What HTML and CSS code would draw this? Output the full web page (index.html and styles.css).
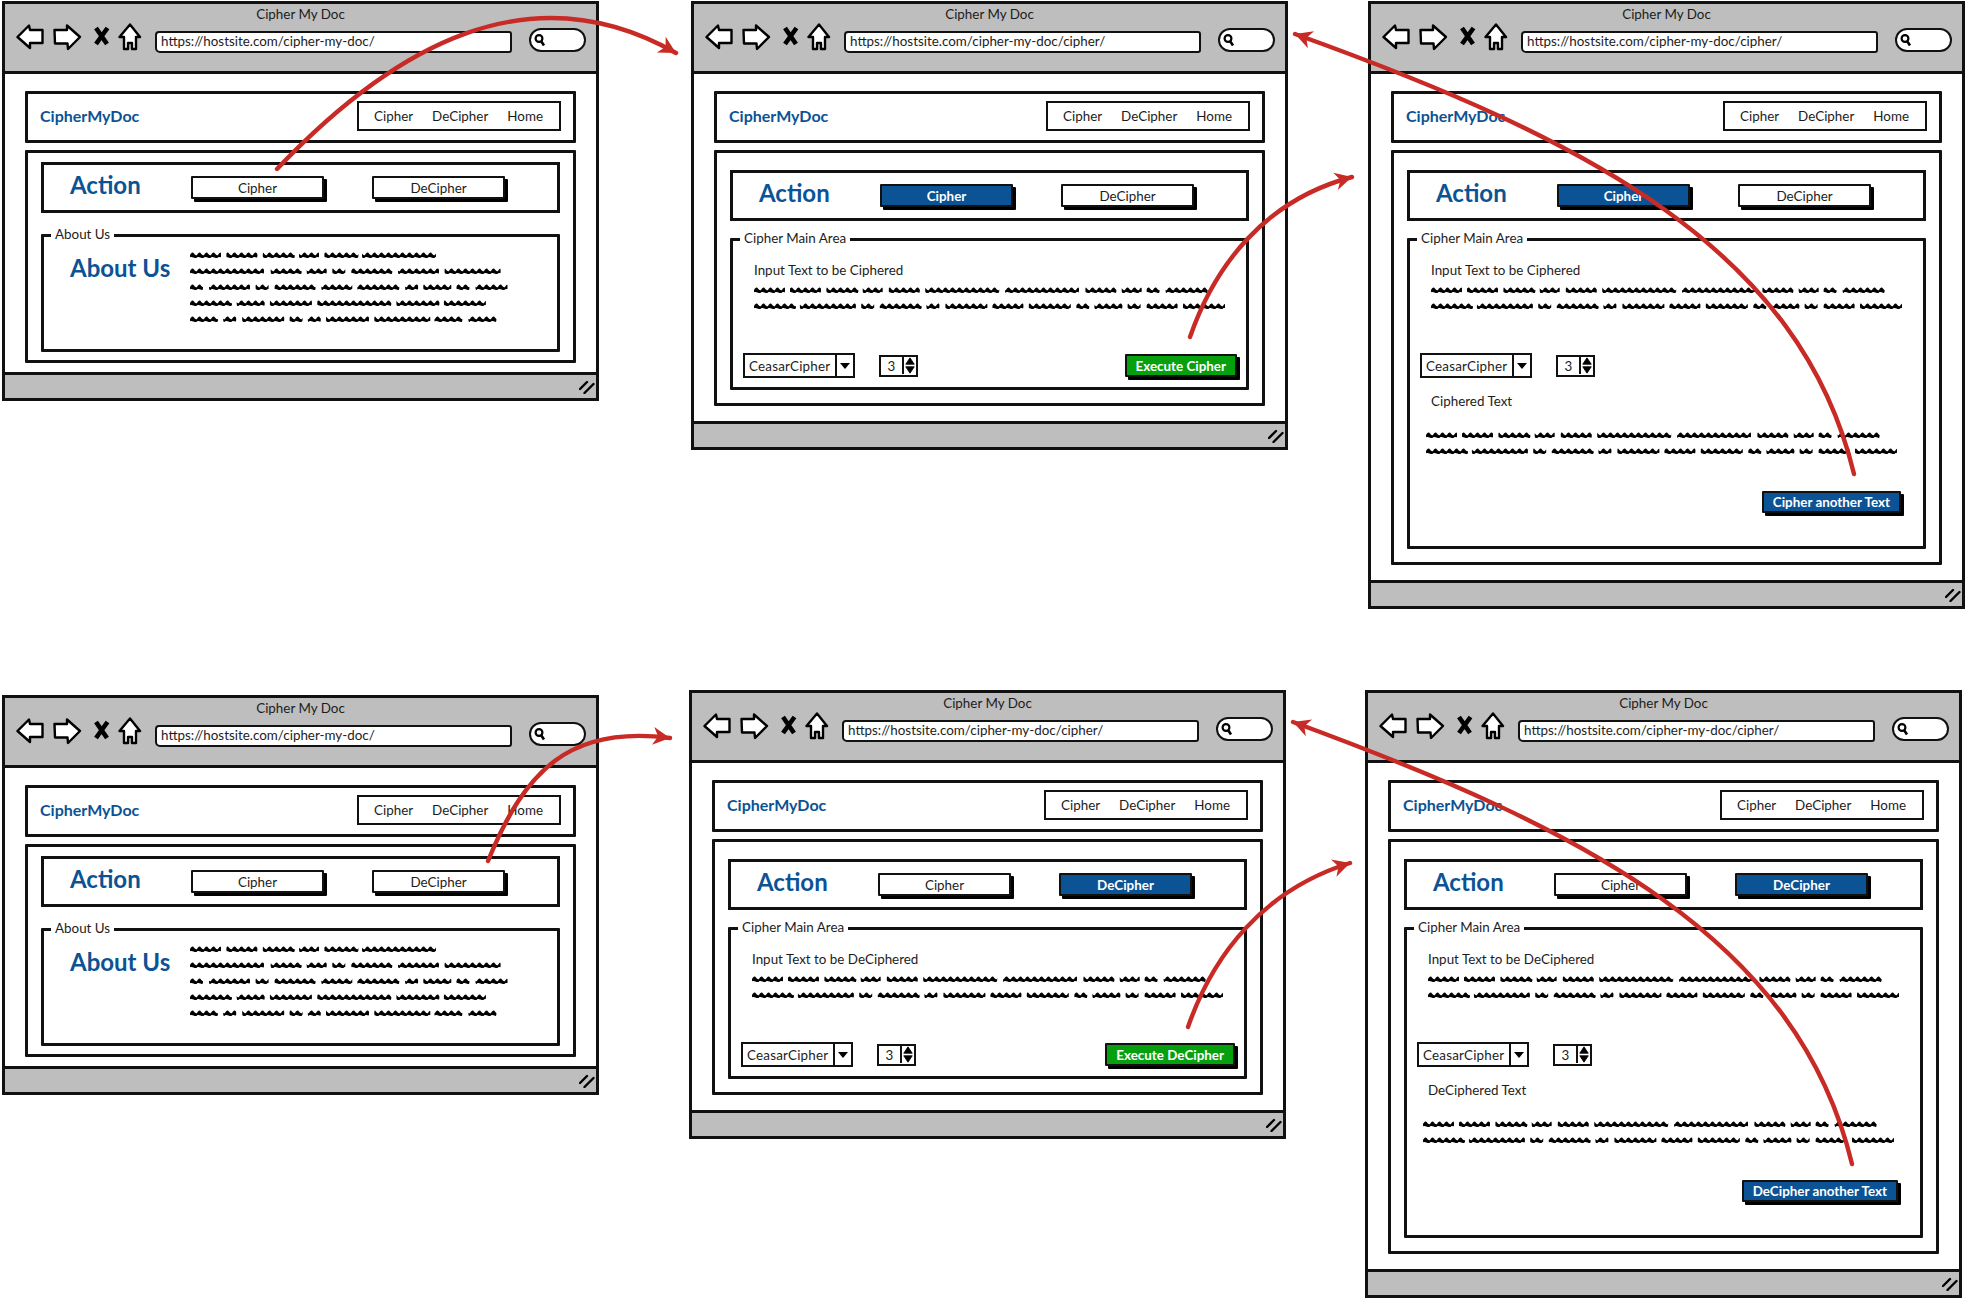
FILE: index.html
```html
<!DOCTYPE html>
<html lang="en">
<head>
<meta charset="utf-8">
<title>Cipher My Doc wireframes</title>
<link rel="stylesheet" href="styles.css">
</head>
<body>
<svg class="defs" xmlns="http://www.w3.org/2000/svg">
  <defs>
    <pattern id="sq" width="7" height="8" patternUnits="userSpaceOnUse">
      <path d="M0 4C1 2.2 2.4 0.9 3.5 2S5.6 4.8 7 4V6.4C6 7.6 4.9 6.8 3.5 6.4S1 5.7 0 6.4Z" fill="#000"/>
    </pattern>
    <marker id="head" markerUnits="userSpaceOnUse" markerWidth="26" markerHeight="26" refX="18" refY="13" orient="auto">
      <path d="M18 13L1 4L6 13L1 22Z" fill="#c82a26"/>
    </marker>
  </defs>
  <symbol id="a1"><g fill="url(#sq)"><rect width="31" height="8" rx="3"/><rect x="36.4" width="31" height="8" rx="3"/><rect x="72.8" width="32" height="8" rx="3"/><rect x="109" width="20" height="8" rx="3"/><rect x="134.4" width="34" height="8" rx="3"/><rect x="172" width="74" height="8" rx="3"/></g></symbol>
  <symbol id="a2"><g fill="url(#sq)"><rect width="74" height="8" rx="3"/><rect x="80.7" width="31" height="8" rx="3"/><rect x="116.7" width="20" height="8" rx="3"/><rect x="142.3" width="13" height="8" rx="3"/><rect x="161.3" width="41" height="8" rx="3"/><rect x="208" width="41" height="8" rx="3"/><rect x="254.6" width="56" height="8" rx="3"/></g></symbol>
  <symbol id="a3"><g fill="url(#sq)"><rect width="13" height="8" rx="3"/><rect x="19" width="41" height="8" rx="3"/><rect x="65.6" width="13" height="8" rx="3"/><rect x="84.6" width="41" height="8" rx="3"/><rect x="131.3" width="31" height="8" rx="3"/><rect x="167.3" width="42" height="8" rx="3"/><rect x="215.1" width="13" height="8" rx="3"/><rect x="233.3" width="28" height="8" rx="3"/><rect x="266.5" width="13" height="8" rx="3"/><rect x="285.5" width="32" height="8" rx="3"/></g></symbol>
  <symbol id="a4"><g fill="url(#sq)"><rect width="42" height="8" rx="3"/><rect x="46.7" width="28" height="8" rx="3"/><rect x="79.9" width="42" height="8" rx="3"/><rect x="127.3" width="74" height="8" rx="3"/><rect x="206.4" width="43" height="8" rx="3"/><rect x="253.9" width="42" height="8" rx="3"/></g></symbol>
  <symbol id="a5"><g fill="url(#sq)"><rect width="28" height="8" rx="3"/><rect x="33.2" width="13" height="8" rx="3"/><rect x="52.2" width="42" height="8" rx="3"/><rect x="99.6" width="13" height="8" rx="3"/><rect x="117.8" width="13" height="8" rx="3"/><rect x="136" width="43" height="8" rx="3"/><rect x="184.3" width="56" height="8" rx="3"/><rect x="244.4" width="28" height="8" rx="3"/><rect x="278.4" width="28" height="8" rx="3"/></g></symbol>
  <symbol id="t1"><g fill="url(#sq)"><rect width="31" height="8" rx="3"/><rect x="36" width="31" height="8" rx="3"/><rect x="72.4" width="32" height="8" rx="3"/><rect x="108.7" width="20" height="8" rx="3"/><rect x="134.8" width="31" height="8" rx="3"/><rect x="171.2" width="74" height="8" rx="3"/><rect x="251" width="74" height="8" rx="3"/><rect x="331.4" width="31" height="8" rx="3"/><rect x="367.7" width="20" height="8" rx="3"/><rect x="392.6" width="13" height="8" rx="3"/><rect x="411.6" width="42" height="8" rx="3"/></g></symbol>
  <symbol id="t2"><g fill="url(#sq)"><rect width="42" height="8" rx="3"/><rect x="45.9" width="56" height="8" rx="3"/><rect x="107.2" width="13" height="8" rx="3"/><rect x="125.7" width="42" height="8" rx="3"/><rect x="172.4" width="13" height="8" rx="3"/><rect x="191.4" width="42" height="8" rx="3"/><rect x="238.4" width="31" height="8" rx="3"/><rect x="274.8" width="42" height="8" rx="3"/><rect x="322.3" width="13" height="8" rx="3"/><rect x="340.4" width="28" height="8" rx="3"/><rect x="373.6" width="13" height="8" rx="3"/><rect x="392.6" width="31" height="8" rx="3"/><rect x="429" width="42" height="8" rx="3"/></g></symbol>
  <symbol id="navicons" viewBox="0 0 126 28">
    <g fill="#fff" stroke="#000" stroke-width="2.4" stroke-linejoin="round">
      <path d="M1.5 14L13 2.5L14 7H26.5V20H14V25Z"/>
      <path d="M38.5 7H51V2.5L64 14L52 26L51.5 20.5H39Z"/>
      <path d="M114 1.5L124 14H120V26H116V20H112V26H108V14H103.5Z"/>
    </g>
    <path d="M80 5L91 21M91.5 5L80 21" fill="none" stroke="#000" stroke-width="4.6"/>
  </symbol>
  <symbol id="lens" viewBox="0 0 12 14">
    <circle cx="5" cy="5.5" r="3.4" fill="#fff" stroke="#000" stroke-width="2.2"/>
    <path d="M7 8L10 12.5" stroke="#000" stroke-width="2.6"/>
  </symbol>
  <symbol id="grip" viewBox="0 0 16 14">
    <path d="M1 9L8 2M5.5 13L14.5 4" stroke="#000" stroke-width="2.4" stroke-linecap="round"/>
  </symbol>
  <symbol id="spin" viewBox="0 0 14 20">
    <path d="M7 1L12 8.5H2Z M7 19L2 11.5H12Z" fill="#000" stroke="#000" stroke-width="1" stroke-linejoin="round"/>
  </symbol>
</svg>

<main class="canvas">

<section class="window win1">
  <header class="chrome">
    <div class="title">Cipher My Doc</div>
    <div class="toolbar">
      <svg class="navicons"><use href="#navicons"/></svg>
      <div class="url">https://hostsite.com/cipher-my-doc/</div>
      <div class="search"><svg class="lens"><use href="#lens"/></svg></div>
    </div>
  </header>
  <div class="content">
    <div class="navbox">
      <div class="logo">CipherMyDoc</div>
      <nav class="links"><span>Cipher</span><span>DeCipher</span><span>Home</span></nav>
    </div>
    <div class="mainbox mainbox-about">
      <div class="action">
        <h2 class="heading">Action</h2>
        <div class="btn">Cipher</div>
        <div class="btn">DeCipher</div>
      </div>
      <div class="group group-about">
        <div class="legend">About Us</div>
        <h2 class="heading">About Us</h2>
        <div class="para">
          <svg class="sq"><use href="#a1"/></svg><svg class="sq"><use href="#a2"/></svg><svg class="sq"><use href="#a3"/></svg><svg class="sq"><use href="#a4"/></svg><svg class="sq"><use href="#a5"/></svg>
        </div>
      </div>
    </div>
  </div>
  <footer class="foot"><svg class="grip"><use href="#grip"/></svg></footer>
</section>

<section class="window win2">
  <header class="chrome">
    <div class="title">Cipher My Doc</div>
    <div class="toolbar">
      <svg class="navicons"><use href="#navicons"/></svg>
      <div class="url">https://hostsite.com/cipher-my-doc/cipher/</div>
      <div class="search"><svg class="lens"><use href="#lens"/></svg></div>
    </div>
  </header>
  <div class="content">
    <div class="navbox">
      <div class="logo">CipherMyDoc</div>
      <nav class="links"><span>Cipher</span><span>DeCipher</span><span>Home</span></nav>
    </div>
    <div class="mainbox mainbox-cipher">
      <div class="action">
        <h2 class="heading">Action</h2>
        <div class="btn btn-blue">Cipher</div>
        <div class="btn">DeCipher</div>
      </div>
      <div class="group group-cipher">
        <div class="legend">Cipher Main Area</div>
        <div class="label">Input Text to be Ciphered</div>
        <div class="input-lines">
          <svg class="sq"><use href="#t1"/></svg><svg class="sq"><use href="#t2"/></svg>
        </div>
        <div class="controls">
          <div class="select"><span class="select-text">CeasarCipher</span><span class="caret"></span></div>
          <div class="spinner"><span class="spin-val">3</span><svg class="spin-btn"><use href="#spin"/></svg></div>
          <div class="btn btn-green">Execute Cipher</div>
        </div>
      </div>
    </div>
  </div>
  <footer class="foot"><svg class="grip"><use href="#grip"/></svg></footer>
</section>

<section class="window win3">
  <header class="chrome">
    <div class="title">Cipher My Doc</div>
    <div class="toolbar">
      <svg class="navicons"><use href="#navicons"/></svg>
      <div class="url">https://hostsite.com/cipher-my-doc/cipher/</div>
      <div class="search"><svg class="lens"><use href="#lens"/></svg></div>
    </div>
  </header>
  <div class="content">
    <div class="navbox">
      <div class="logo">CipherMyDoc</div>
      <nav class="links"><span>Cipher</span><span>DeCipher</span><span>Home</span></nav>
    </div>
    <div class="mainbox mainbox-cipher">
      <div class="action">
        <h2 class="heading">Action</h2>
        <div class="btn btn-blue">Cipher</div>
        <div class="btn">DeCipher</div>
      </div>
      <div class="group group-cipher">
        <div class="legend">Cipher Main Area</div>
        <div class="label">Input Text to be Ciphered</div>
        <div class="input-lines">
          <svg class="sq"><use href="#t1"/></svg><svg class="sq"><use href="#t2"/></svg>
        </div>
        <div class="controls">
          <div class="select"><span class="select-text">CeasarCipher</span><span class="caret"></span></div>
          <div class="spinner"><span class="spin-val">3</span><svg class="spin-btn"><use href="#spin"/></svg></div>
        </div>
        <div class="label label-out">Ciphered Text</div>
        <div class="output-lines">
          <svg class="sq"><use href="#t1"/></svg><svg class="sq"><use href="#t2"/></svg>
        </div>
        <div class="again"><div class="btn btn-blue btn-auto">Cipher another Text</div></div>
      </div>
    </div>
  </div>
  <footer class="foot"><svg class="grip"><use href="#grip"/></svg></footer>
</section>

<section class="window win4">
  <header class="chrome">
    <div class="title">Cipher My Doc</div>
    <div class="toolbar">
      <svg class="navicons"><use href="#navicons"/></svg>
      <div class="url">https://hostsite.com/cipher-my-doc/</div>
      <div class="search"><svg class="lens"><use href="#lens"/></svg></div>
    </div>
  </header>
  <div class="content">
    <div class="navbox">
      <div class="logo">CipherMyDoc</div>
      <nav class="links"><span>Cipher</span><span>DeCipher</span><span>Home</span></nav>
    </div>
    <div class="mainbox mainbox-about">
      <div class="action">
        <h2 class="heading">Action</h2>
        <div class="btn">Cipher</div>
        <div class="btn">DeCipher</div>
      </div>
      <div class="group group-about">
        <div class="legend">About Us</div>
        <h2 class="heading">About Us</h2>
        <div class="para">
          <svg class="sq"><use href="#a1"/></svg><svg class="sq"><use href="#a2"/></svg><svg class="sq"><use href="#a3"/></svg><svg class="sq"><use href="#a4"/></svg><svg class="sq"><use href="#a5"/></svg>
        </div>
      </div>
    </div>
  </div>
  <footer class="foot"><svg class="grip"><use href="#grip"/></svg></footer>
</section>

<section class="window win5">
  <header class="chrome">
    <div class="title">Cipher My Doc</div>
    <div class="toolbar">
      <svg class="navicons"><use href="#navicons"/></svg>
      <div class="url">https://hostsite.com/cipher-my-doc/cipher/</div>
      <div class="search"><svg class="lens"><use href="#lens"/></svg></div>
    </div>
  </header>
  <div class="content">
    <div class="navbox">
      <div class="logo">CipherMyDoc</div>
      <nav class="links"><span>Cipher</span><span>DeCipher</span><span>Home</span></nav>
    </div>
    <div class="mainbox mainbox-cipher">
      <div class="action">
        <h2 class="heading">Action</h2>
        <div class="btn">Cipher</div>
        <div class="btn btn-blue">DeCipher</div>
      </div>
      <div class="group group-cipher">
        <div class="legend">Cipher Main Area</div>
        <div class="label">Input Text to be DeCiphered</div>
        <div class="input-lines">
          <svg class="sq"><use href="#t1"/></svg><svg class="sq"><use href="#t2"/></svg>
        </div>
        <div class="controls">
          <div class="select"><span class="select-text">CeasarCipher</span><span class="caret"></span></div>
          <div class="spinner"><span class="spin-val">3</span><svg class="spin-btn"><use href="#spin"/></svg></div>
          <div class="btn btn-green">Execute DeCipher</div>
        </div>
      </div>
    </div>
  </div>
  <footer class="foot"><svg class="grip"><use href="#grip"/></svg></footer>
</section>

<section class="window win6">
  <header class="chrome">
    <div class="title">Cipher My Doc</div>
    <div class="toolbar">
      <svg class="navicons"><use href="#navicons"/></svg>
      <div class="url">https://hostsite.com/cipher-my-doc/cipher/</div>
      <div class="search"><svg class="lens"><use href="#lens"/></svg></div>
    </div>
  </header>
  <div class="content">
    <div class="navbox">
      <div class="logo">CipherMyDoc</div>
      <nav class="links"><span>Cipher</span><span>DeCipher</span><span>Home</span></nav>
    </div>
    <div class="mainbox mainbox-cipher">
      <div class="action">
        <h2 class="heading">Action</h2>
        <div class="btn">Cipher</div>
        <div class="btn btn-blue">DeCipher</div>
      </div>
      <div class="group group-cipher">
        <div class="legend">Cipher Main Area</div>
        <div class="label">Input Text to be DeCiphered</div>
        <div class="input-lines">
          <svg class="sq"><use href="#t1"/></svg><svg class="sq"><use href="#t2"/></svg>
        </div>
        <div class="controls">
          <div class="select"><span class="select-text">CeasarCipher</span><span class="caret"></span></div>
          <div class="spinner"><span class="spin-val">3</span><svg class="spin-btn"><use href="#spin"/></svg></div>
        </div>
        <div class="label label-out">DeCiphered Text</div>
        <div class="output-lines">
          <svg class="sq"><use href="#t1"/></svg><svg class="sq"><use href="#t2"/></svg>
        </div>
        <div class="again"><div class="btn btn-blue btn-auto">DeCipher another Text</div></div>
      </div>
    </div>
  </div>
  <footer class="foot"><svg class="grip"><use href="#grip"/></svg></footer>
</section>

<svg class="arrows" viewBox="0 0 1966 1298" xmlns="http://www.w3.org/2000/svg">
  <g fill="none" stroke="#c82a26" stroke-width="4.4" stroke-linecap="round">
    <path marker-end="url(#head)" d="M277 169C395 45 530 -30 676 53"/>
    <path marker-end="url(#head)" d="M1190 337C1215 265 1265 200 1352 177"/>
    <path marker-end="url(#head)" d="M1854 474C1800 250 1590 140 1295 34"/>
    <path marker-end="url(#head)" d="M488 861C525 770 570 725 670 738"/>
    <path marker-end="url(#head)" d="M1188 1027C1213 955 1263 890 1350 863"/>
    <path marker-end="url(#head)" d="M1852 1164C1798 940 1588 830 1293 722"/>
  </g>
</svg>

</main>
</body>
</html>
```
FILE: styles.css
```css
* { box-sizing: border-box; }
html, body { margin: 0; padding: 0; background: #fff; }
body { font-family: "Lato", "Liberation Sans", sans-serif; font-size: 13.4px; color: #1c1c1c; }

.defs { width: 0; height: 0; overflow: hidden; display: block; }
.canvas { position: relative; width: 1966px; height: 1298px; overflow: hidden; }
.arrows { position: absolute; left: 0; top: 0; width: 1966px; height: 1298px; pointer-events: none; overflow: visible; }

.window { position: absolute; width: 597px; display: flex; flex-direction: column; border: 3px solid #111; background: #fff; }
.win1 { left: 2px; top: 1px; }
.win2 { left: 691px; top: 1px; }
.win3 { left: 1368px; top: 1px; }
.win4 { left: 2px; top: 695px; }
.win5 { left: 689px; top: 690px; }
.win6 { left: 1365px; top: 690px; }

.chrome { height: 70px; background: #bebebe; border-bottom: 3px solid #111; flex: none; }
.title { height: 20px; line-height: 20px; text-align: center; }
.toolbar { display: flex; align-items: flex-start; padding-left: 11px; margin-top: -1px; }
.navicons { width: 126px; height: 28px; flex: none; }
.url { width: 357px; height: 22px; margin: 8px 0 0 13px; padding-left: 4px; line-height: 16px; background: #fff; border: 2.5px solid #111; border-radius: 4px 3px 3px 5px; white-space: nowrap; }
.search { width: 57px; height: 24px; margin: 5px 0 0 17px; background: #fff; border: 2.5px solid #111; border-radius: 12px; padding: 3px 0 0 3px; }
.lens { display: block; width: 12px; height: 14px; }

.content { padding: 17px 20px 9px; display: flex; flex-direction: column; gap: 7px; flex: none; }

.navbox { height: 52px; border: 3px solid #111; border-radius: 1px; display: flex; align-items: center; justify-content: space-between; padding: 0 12px; }
.logo { font-weight: 700; font-size: 16px; color: #0b5394; margin-bottom: 3px; }
.links { width: 204px; height: 30px; margin-bottom: 2px; border: 2.5px solid #111; display: flex; align-items: center; gap: 19px; padding-left: 15px; }

.mainbox { border: 3px solid #111; border-radius: 1px; padding: 0 13px; }
.mainbox-about { padding-top: 9px; padding-bottom: 8px; }
.mainbox-cipher { padding-top: 17px; padding-bottom: 13px; margin-bottom: 6px; }

.action { height: 51px; border: 3px solid #111; display: flex; align-items: center; padding-left: 26px; }
.heading { margin: 0; font-size: 24px; line-height: 30px; font-weight: 700; color: #0b5394; width: 121px; flex: none; }
.action .heading { margin-bottom: 5px; }
.btn { width: 133px; height: 23px; border: 2.5px solid #111; border-radius: 1px; background: #fff; box-shadow: 3px 3px 0 #000; display: flex; align-items: center; justify-content: center; flex: none; }
.action .btn + .btn { margin-left: 48px; }
.btn-blue { background: #0b5394; color: #fff; font-weight: 700; }
.btn-green { background: #06a00e; color: #fff; font-weight: 700; width: auto; padding: 0 9px; margin-left: auto; margin-right: 9px; }
.btn-auto { width: auto; padding: 0 9px; height: 22px; }

.group { position: relative; border: 3px solid #111; border-radius: 1px; }
.legend { position: absolute; left: 7px; top: -12px; height: 18px; line-height: 18px; padding: 0 4px; background: #fff; }
.mainbox-about .group { margin-top: 21px; }
.mainbox-cipher .group { margin-top: 17px; }

.group-about { display: flex; padding: 9px 0 25px 26px; }
.group-about .heading { width: 120px; margin-top: 7px; }
.para { padding-top: 5px; padding-bottom: 1px; }
.sq { display: block; width: 480px; height: 8px; }
.sq + .sq { margin-top: 8px; }

.group-cipher { padding-top: 20px; padding-bottom: 9px; }
.label { height: 18px; line-height: 18px; padding-left: 21px; }
.label-out { margin-top: 14px; }
.input-lines { padding: 7px 0 0 21px; margin-bottom: 1px; }
.output-lines { padding: 21px 0 0 16px; margin-bottom: 1px; }

.controls { display: flex; align-items: center; margin-top: 43px; padding-left: 10px; height: 25px; }
.select { width: 112px; height: 25px; border: 2.5px solid #111; display: flex; align-items: center; background: #fff; }
.select-text { flex: 1; padding-left: 4px; letter-spacing: 0.2px; }
.caret { width: 18px; height: 100%; border-left: 2.5px solid #111; flex: none; display: flex; align-items: center; justify-content: center; }
.caret::after { content: ""; border-left: 5px solid transparent; border-right: 5px solid transparent; border-top: 6px solid #000; }
.spinner { width: 39px; height: 22px; margin-left: 24px; border: 2.5px solid #111; display: flex; align-items: stretch; background: #fff; }
.spin-val { flex: 1; display: flex; align-items: center; justify-content: center; }
.spin-btn { width: 14px; height: 17px; border-left: 2.5px solid #111; flex: none; }

.again { display: flex; justify-content: flex-end; margin-top: 36px; padding: 0 22px 24px 0; }

.foot { height: 26px; background: #bebebe; border-top: 3px solid #111; display: flex; align-items: center; justify-content: flex-end; padding-right: 1px; flex: none; }
.grip { width: 16px; height: 14px; }
```
